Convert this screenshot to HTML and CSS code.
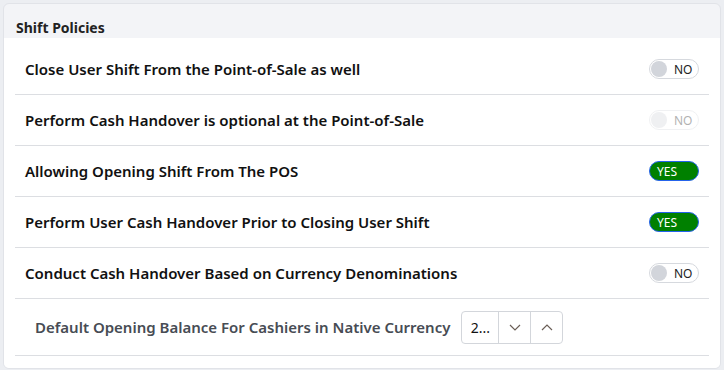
FILE: index.html
```html
<!DOCTYPE html>
<html lang="en">
<head>
  <meta charset="UTF-8">
  <meta name="viewport" content="width=device-width, initial-scale=1.0">
  <title>Shift Policies</title>
  <link rel="stylesheet" href="styles.css">
</head>
<body>

<div class="card">
  <div class="card-head">Shift Policies</div>
  <div class="card-body">

    <div class="row">
      <span class="label">Close User Shift From the Point-of-Sale as well</span>
      <span class="toggle off"><span class="knob"></span><span class="state">NO</span></span>
    </div>

    <div class="row">
      <span class="label">Perform Cash Handover is optional at the Point-of-Sale</span>
      <span class="toggle off disabled"><span class="knob"></span><span class="state">NO</span></span>
    </div>

    <div class="row">
      <span class="label">Allowing Opening Shift From The POS</span>
      <span class="toggle on"><span class="state">YES</span></span>
    </div>

    <div class="row">
      <span class="label">Perform User Cash Handover Prior to Closing User Shift</span>
      <span class="toggle on"><span class="state">YES</span></span>
    </div>

    <div class="row">
      <span class="label">Conduct Cash Handover Based on Currency Denominations</span>
      <span class="toggle off"><span class="knob"></span><span class="state">NO</span></span>
    </div>

    <div class="row field">
      <span class="label muted">Default Opening Balance For Cashiers in Native Currency</span>
      <div class="spin">
        <span class="spin-value">2...</span>
        <span class="spin-btn">
          <svg width="12" height="7" viewBox="0 0 12 7"><path d="M1 1l5 5 5-5" fill="none" stroke="#6b5f57" stroke-width="1.2"/></svg>
        </span>
        <span class="spin-btn">
          <svg width="12" height="7" viewBox="0 0 12 7"><path d="M1 6l5-5 5 5" fill="none" stroke="#6b5f57" stroke-width="1.2"/></svg>
        </span>
      </div>
    </div>

  </div>
</div>

</body>
</html>
```

FILE: styles.css
```css
body {
  font-family: 'Noto Sans', 'Open Sans', sans-serif;
  background-color: #eceef2;
  color: #111;
  margin: 0;
  padding: 3px 3px 4px 3px;
}

.card {
  background: #f3f4f7;
  border: 1px solid #e1e3e8;
  border-radius: 6px;
  overflow: hidden;
}

.card-head {
  height: 34px;
  box-sizing: border-box;
  padding: 0 0 1px 12px;
  display: flex;
  align-items: flex-end;
  font-size: 14px;
  font-weight: 700;
  color: #222;
}

.card-body {
  background: #fff;
  padding: 6px 11px 12px 11px;
}

.row {
  height: 50px;
  border-bottom: 1px solid #dcdee2;
  padding: 0 10px;
  display: flex;
  align-items: center;
  justify-content: space-between;
}

.label {
  font-size: 15px;
  font-weight: 600;
}

.label.muted {
  color: #474c54;
  padding-left: 10px;
}

.row.field {
  height: 56px;
  justify-content: flex-start;
  gap: 11px;
}

.toggle {
  width: 50px;
  height: 20px;
  box-sizing: border-box;
  border-radius: 10px;
  display: flex;
  align-items: center;
  font-size: 12px;
}

.toggle.off {
  border: 1px solid #d6d9de;
  background: #fff;
  padding-left: 1px;
}

.toggle .knob {
  width: 16px;
  height: 16px;
  border-radius: 50%;
  background: #d2d5db;
}

.toggle.off .state {
  margin-left: 7px;
  color: #222;
}

.toggle.disabled {
  opacity: 0.35;
}

.toggle.on {
  background: #008000;
  border: 1px solid #2563eb;
  color: #fff;
  padding-left: 7px;
}

.spin {
  display: flex;
  height: 31px;
  border: 1px solid #d3d6db;
  border-radius: 4px;
}

.spin-value {
  width: 36px;
  display: flex;
  align-items: center;
  justify-content: center;
  font-size: 14px;
  border-right: 1px solid #d3d6db;
}

.spin-btn {
  width: 31px;
  display: flex;
  align-items: center;
  justify-content: center;
}

.spin-btn + .spin-btn {
  border-left: 1px solid #d3d6db;
}
```
